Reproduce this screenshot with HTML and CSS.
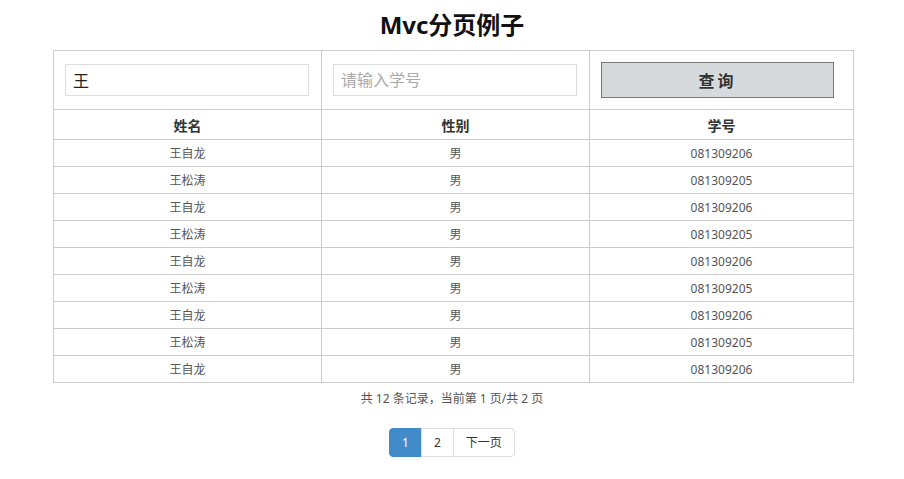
FILE: index.html
```html
<!DOCTYPE html>
<html lang="zh-CN">
<head>
<meta charset="utf-8">
<title>Mvc分页例子</title>
<link rel="stylesheet" href="styles.css">
</head>
<body>
<h1 class="title">Mvc分页例子</h1>
<table class="grid">
  <colgroup><col class="c1"><col class="c2"><col></colgroup>
  <tr class="search-row">
    <td><input class="field" type="text" value="王"></td>
    <td><input class="field" type="text" placeholder="请输入学号"></td>
    <td><button class="btn-search">查询</button></td>
  </tr>
  <tr class="head-row"><th>姓名</th><th>性别</th><th>学号</th></tr>
  <tr><td>王自龙</td><td>男</td><td>081309206</td></tr>
  <tr><td>王松涛</td><td>男</td><td>081309205</td></tr>
  <tr><td>王自龙</td><td>男</td><td>081309206</td></tr>
  <tr><td>王松涛</td><td>男</td><td>081309205</td></tr>
  <tr><td>王自龙</td><td>男</td><td>081309206</td></tr>
  <tr><td>王松涛</td><td>男</td><td>081309205</td></tr>
  <tr><td>王自龙</td><td>男</td><td>081309206</td></tr>
  <tr><td>王松涛</td><td>男</td><td>081309205</td></tr>
  <tr><td>王自龙</td><td>男</td><td>081309206</td></tr>
</table>
<p class="summary">共 12 条记录，当前第 1 页/共 2 页</p>
<div class="pager-wrap">
  <ul class="pager">
    <li class="active"><a>1</a></li>
    <li><a>2</a></li>
    <li><a>下一页</a></li>
  </ul>
</div>
</body>
</html>
```
FILE: styles.css
```css
body {
  margin: 0;
  font-family: "Noto Sans", "Noto Sans CJK SC", sans-serif;
  color: #555;
  background: #fff;
}
.title {
  margin: 8px 0;
  line-height: 34px;
  font-size: 24px;
  font-weight: bold;
  color: #111;
  text-align: center;
}
.grid {
  width: 801px;
  margin: 0 0 0 53px;
  border-collapse: collapse;
  table-layout: fixed;
  font-size: 12px;
}
.grid col.c1, .grid col.c2 { width: 268px; }
.grid td, .grid th {
  border: 1px solid #ccc;
  text-align: center;
  height: 26px;
  padding: 0;
  vertical-align: middle;
}
.grid th {
  height: 29px;
  font-size: 14px;
  font-weight: bold;
  color: #333;
}
.search-row td {
  height: 36px;
  padding: 11px 12px 11px 11px;
  text-align: left;
}
.field {
  box-sizing: border-box;
  display: block;
  width: 100%;
  height: 32px;
  border: 1px solid #ddd;
  padding: 0 7px;
  font-family: "Noto Sans", "Noto Sans CJK SC", sans-serif;
  font-size: 16px;
  color: #222;
  outline: none;
}
.field::placeholder { color: #aaa; }
.btn-search {
  display: block;
  box-sizing: border-box;
  width: 233px;
  height: 36px;
  background: #d6dadc;
  border: 1px solid #777;
  font-family: "Noto Sans", "Noto Sans CJK SC", sans-serif;
  font-size: 16px;
  font-weight: bold;
  letter-spacing: 3px;
  color: #333;
  padding: 0;
}
.summary {
  margin: 8px 0 0;
  line-height: 16px;
  font-size: 12px;
  text-align: center;
  color: #555;
}
.pager-wrap {
  display: flex;
  justify-content: center;
  margin-top: 21px;
}
.pager {
  display: flex;
  list-style: none;
  margin: 0;
  padding: 0;
  font-size: 12px;
}
.pager li a {
  display: block;
  padding: 5px 12px;
  line-height: 17px;
  border: 1px solid #ddd;
  margin-left: -1px;
  color: #333;
  background: #fff;
}
.pager li:first-child a {
  margin-left: 0;
  border-radius: 4px 0 0 4px;
}
.pager li:last-child a { border-radius: 0 4px 4px 0; }
.pager li.active a {
  background: #428bca;
  border-color: #428bca;
  color: #fff;
}
```
